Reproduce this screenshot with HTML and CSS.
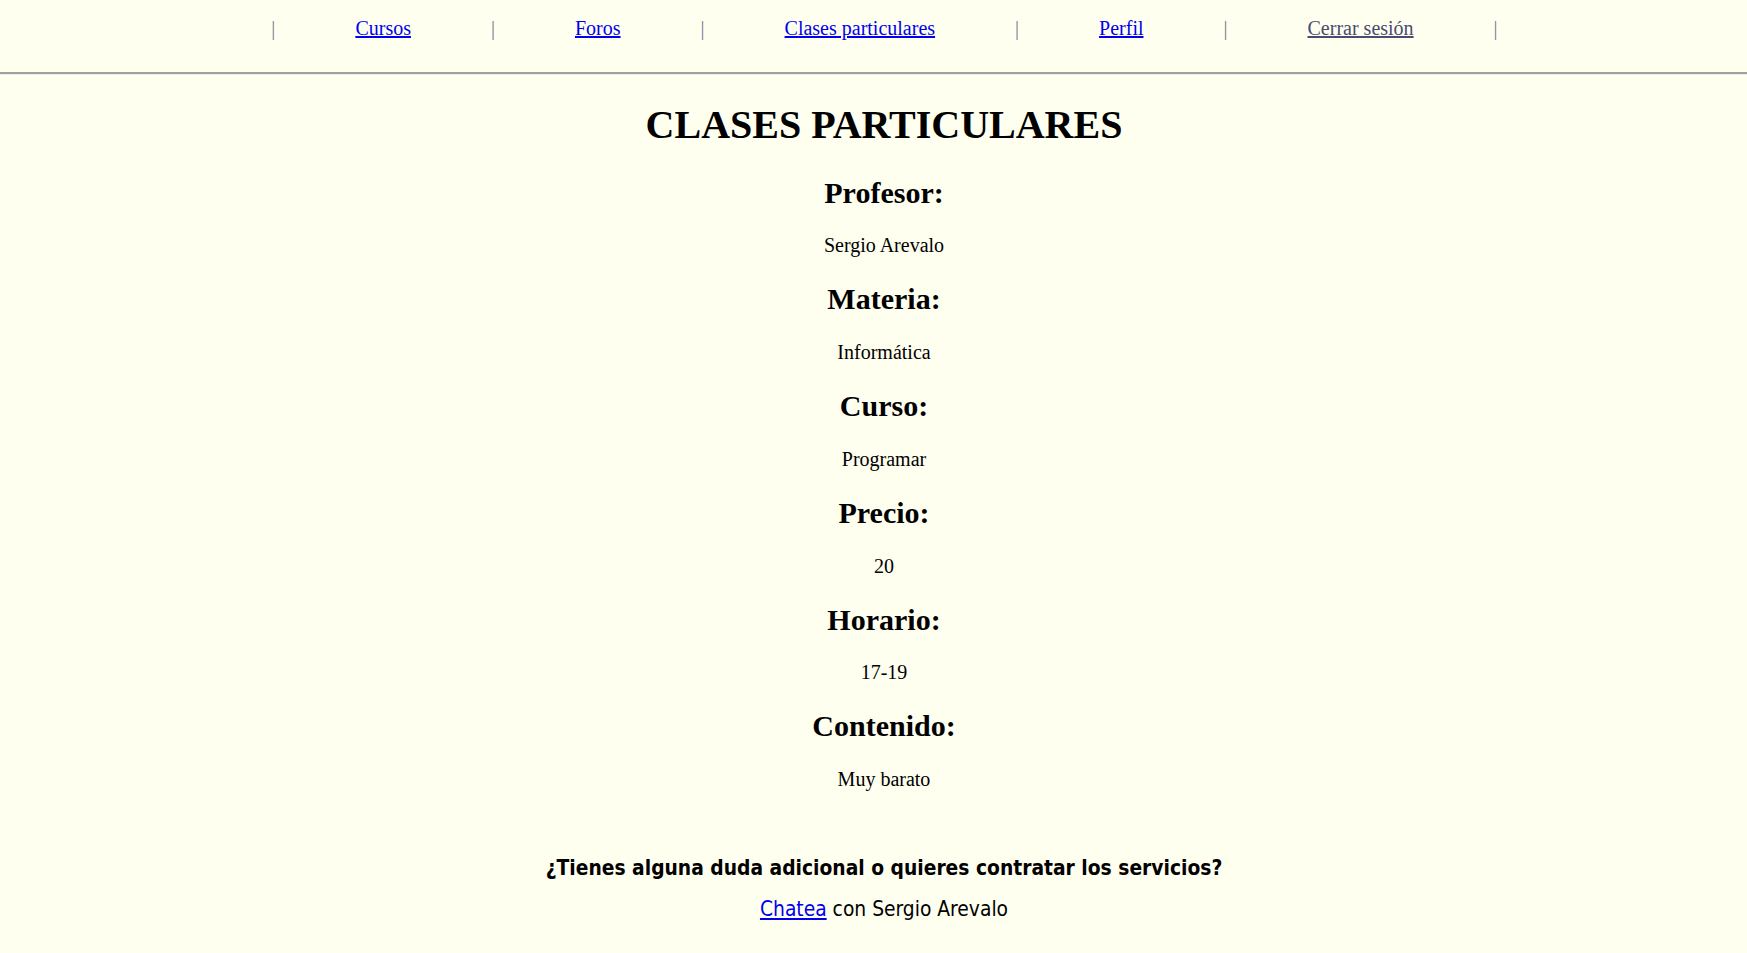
FILE: index.html
```html
<!DOCTYPE html>
<html lang="es">
<head>
<meta charset="utf-8">
<title>Clases particulares</title>
<link rel="stylesheet" href="styles.css">
</head>
<body>
<header class="topbar">
  <nav class="menu">
    <span class="sep">|</span>
    <a class="menu-link" href="#">Cursos</a>
    <span class="sep">|</span>
    <a class="menu-link" href="#">Foros</a>
    <span class="sep">|</span>
    <a class="menu-link" href="#">Clases particulares</a>
    <span class="sep">|</span>
    <a class="menu-link" href="#">Perfil</a>
    <span class="sep">|</span>
    <a class="menu-link logout" href="#">Cerrar sesión</a>
    <span class="sep">|</span>
  </nav>
</header>
<main class="content">
  <h1 class="title">CLASES PARTICULARES</h1>
  <h2 class="label">Profesor:</h2>
  <p class="value">Sergio Arevalo</p>
  <h2 class="label">Materia:</h2>
  <p class="value">Informática</p>
  <h2 class="label">Curso:</h2>
  <p class="value">Programar</p>
  <h2 class="label">Precio:</h2>
  <p class="value">20</p>
  <h2 class="label">Horario:</h2>
  <p class="value">17-19</p>
  <h2 class="label">Contenido:</h2>
  <p class="value">Muy barato</p>
  <section class="contact">
    <p class="contact-question">¿Tienes alguna duda adicional o quieres contratar los servicios?</p>
    <p class="contact-line"><a class="chat-link" href="#">Chatea</a> con Sergio Arevalo</p>
  </section>
</main>
</body>
</html>
```
FILE: styles.css
```css
html, body {
  margin: 0;
  padding: 0;
  background: #fffff0;
}
body {
  font-family: "Liberation Serif", "Times New Roman", serif;
  color: #000;
}
.topbar {
  border-bottom: 2px solid #a0a0a0;
  box-shadow: 0 1px 0 #ececec;
  padding: 17px 0 32px 22px;
}
.menu {
  display: flex;
  justify-content: center;
  align-items: baseline;
  font-size: 20px;
  line-height: 23px;
}
.sep {
  color: #7a7a8a;
}
.menu-link {
  color: #0000ee;
  text-decoration: underline;
  margin: 0 80px;
}
.menu-link.logout {
  color: #4a4a72;
}
.content {
  text-align: center;
  padding: 1px 0 0 21px;
}
.title {
  font-size: 40px;
  line-height: 46px;
  margin: 27px 0 27.5px;
  font-weight: bold;
}
.label {
  font-size: 30px;
  line-height: 33.8px;
  margin: 25px 0;
  font-weight: bold;
}
.value {
  font-size: 20px;
  line-height: 23px;
  margin: 20px 0;
}
.contact {
  margin-top: 66px;
  font-family: "DejaVu Sans Condensed", "DejaVu Sans", sans-serif;
}
.contact-question {
  font-weight: bold;
  font-size: 20.8px;
  line-height: 23px;
  margin: 0 0 18px;
}
.contact-line {
  font-size: 20.8px;
  line-height: 23px;
  margin: 0;
}
.chat-link {
  color: #0000ee;
}
```
